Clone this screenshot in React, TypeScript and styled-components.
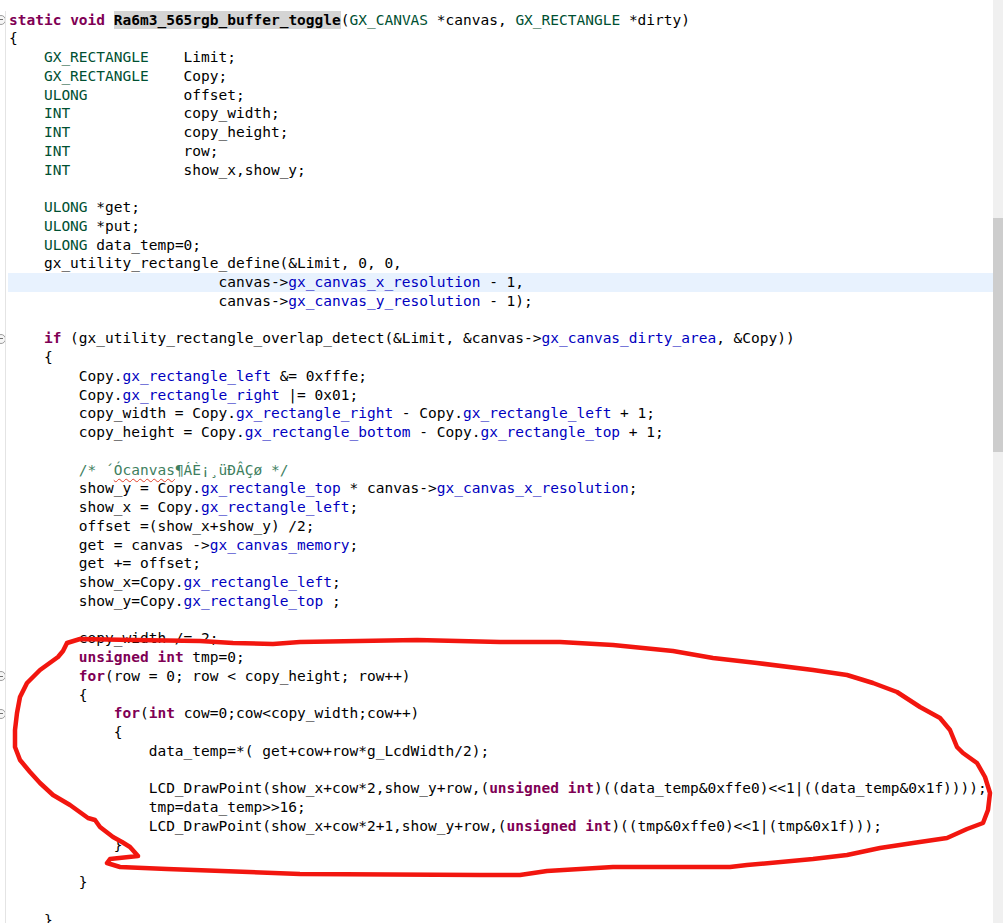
import React from "react";
import styled, { createGlobalStyle } from "styled-components";

const GlobalStyle = createGlobalStyle`
  html, body {
    margin: 0;
    padding: 0;
    background: #ffffff;
    overflow: hidden;
  }
`;

const Screen = styled.div`
  position: relative;
  display: flex;
  width: 1003px;
  height: 923px;
  overflow: hidden;
  background: #ffffff;
`;

const Editor = styled.div`
  flex: 1;
  padding-top: 10.6px;
  font-family: "DejaVu Sans Mono", "Liberation Mono", monospace;
  font-size: 14.5px;
  color: #000000;
`;

const Row = styled.div`
  display: flex;
  height: 18.76px;
  line-height: 18.76px;
`;

const Gutter = styled.div`
  width: 5px;
  flex: none;
  border-right: 1px solid #e4e4e4;
  display: flex;
  align-items: center;
  overflow: hidden;
`;

const FoldMark = styled.span`
  position: relative;
  flex: none;
  width: 8px;
  height: 8px;
  margin-left: -4px;
  border: 1px solid #9c9c9c;
  border-radius: 50%;
  background: #f6f6f6;

  &::after {
    content: "";
    position: absolute;
    left: 2px;
    right: 2px;
    top: 3.5px;
    height: 1px;
    background: #707070;
  }
`;

const Code = styled.div<{ $current?: boolean }>`
  flex: 1;
  margin-left: 2px;
  padding-left: 1px;
  white-space: pre;
  background: ${(p) => (p.$current ? "#e8f2fe" : "transparent")};
`;

type Kind = "kw" | "type" | "field" | "comment" | "fn" | "spell" | "plain";

const Tok = styled.span<{ $kind: Kind }>`
  color: ${(p) =>
    p.$kind === "kw"
      ? "#7f0055"
      : p.$kind === "type"
      ? "#005032"
      : p.$kind === "field"
      ? "#0000c0"
      : p.$kind === "comment" || p.$kind === "spell"
      ? "#3f7f5f"
      : "#000000"};
  font-weight: ${(p) => (p.$kind === "kw" || p.$kind === "fn" ? 700 : 400)};
  background: ${(p) => (p.$kind === "fn" ? "#d4d4d4" : "transparent")};
  padding: ${(p) => (p.$kind === "fn" ? "1px 0" : "0")};
  text-decoration: ${(p) => (p.$kind === "spell" ? "underline wavy #e0402a" : "none")};
  text-decoration-thickness: 1px;
  text-underline-offset: 3px;
`;

const Scrollbar = styled.div`
  width: 10px;
  flex: none;
  background: #f0f0f0;
  display: flex;
  flex-direction: column;
`;

const Thumb = styled.div`
  margin-top: 218px;
  height: 234px;
  background: #cdcdcd;
`;

const Scribble = styled.svg`
  position: absolute;
  top: 0;
  left: 0;
  pointer-events: none;
`;

type Seg = [Kind, string] | string;
type Line = { segs: Seg[]; fold?: boolean; current?: boolean };

const T = (s: string): Seg => ["type", s];
const K = (s: string): Seg => ["kw", s];
const F = (s: string): Seg => ["field", s];

const lines: Line[] = [
  {
    fold: true,
    segs: [K("static"), " ", K("void"), " ", ["fn", "Ra6m3_565rgb_buffer_toggle"], "(", T("GX_CANVAS"), " *canvas, ", T("GX_RECTANGLE"), " *dirty)"],
  },
  { segs: ["{"] },
  { segs: ["    ", T("GX_RECTANGLE"), "    Limit;"] },
  { segs: ["    ", T("GX_RECTANGLE"), "    Copy;"] },
  { segs: ["    ", T("ULONG"), "           offset;"] },
  { segs: ["    ", T("INT"), "             copy_width;"] },
  { segs: ["    ", T("INT"), "             copy_height;"] },
  { segs: ["    ", T("INT"), "             row;"] },
  { segs: ["    ", T("INT"), "             show_x,show_y;"] },
  { segs: [""] },
  { segs: ["    ", T("ULONG"), " *get;"] },
  { segs: ["    ", T("ULONG"), " *put;"] },
  { segs: ["    ", T("ULONG"), " data_temp=0;"] },
  { segs: ["    gx_utility_rectangle_define(&Limit, 0, 0,"] },
  { current: true, segs: ["                        canvas->", F("gx_canvas_x_resolution"), " - 1,"] },
  { segs: ["                        canvas->", F("gx_canvas_y_resolution"), " - 1);"] },
  { segs: [""] },
  {
    fold: true,
    segs: ["    ", K("if"), " (gx_utility_rectangle_overlap_detect(&Limit, &canvas->", F("gx_canvas_dirty_area"), ", &Copy))"],
  },
  { segs: ["    {"] },
  { segs: ["        Copy.", F("gx_rectangle_left"), " &= 0xfffe;"] },
  { segs: ["        Copy.", F("gx_rectangle_right"), " |= 0x01;"] },
  { segs: ["        copy_width = Copy.", F("gx_rectangle_right"), " - Copy.", F("gx_rectangle_left"), " + 1;"] },
  { segs: ["        copy_height = Copy.", F("gx_rectangle_bottom"), " - Copy.", F("gx_rectangle_top"), " + 1;"] },
  { segs: [""] },
  { segs: ["        ", ["comment", "/* ´"], ["spell", "Ócanvas"], ["comment", "¶ÁÈ¡¸üÐÂÇø */"]] },
  { segs: ["        show_y = Copy.", F("gx_rectangle_top"), " * canvas->", F("gx_canvas_x_resolution"), ";"] },
  { segs: ["        show_x = Copy.", F("gx_rectangle_left"), ";"] },
  { segs: ["        offset =(show_x+show_y) /2;"] },
  { segs: ["        get = canvas ->", F("gx_canvas_memory"), ";"] },
  { segs: ["        get += offset;"] },
  { segs: ["        show_x=Copy.", F("gx_rectangle_left"), ";"] },
  { segs: ["        show_y=Copy.", F("gx_rectangle_top"), " ;"] },
  { segs: [""] },
  { segs: ["        copy_width /= 2;"] },
  { segs: ["        ", K("unsigned"), " ", K("int"), " tmp=0;"] },
  { fold: true, segs: ["        ", K("for"), "(row = 0; row < copy_height; row++)"] },
  { segs: ["        {"] },
  { fold: true, segs: ["            ", K("for"), "(", K("int"), " cow=0;cow<copy_width;cow++)"] },
  { segs: ["            {"] },
  { segs: ["                data_temp=*( get+cow+row*g_LcdWidth/2);"] },
  { segs: [""] },
  {
    segs: ["                LCD_DrawPoint(show_x+cow*2,show_y+row,(", K("unsigned"), " ", K("int"), ")((data_temp&0xffe0)<<1|((data_temp&0x1f))));"],
  },
  { segs: ["                tmp=data_temp>>16;"] },
  {
    segs: ["                LCD_DrawPoint(show_x+cow*2+1,show_y+row,(", K("unsigned"), " ", K("int"), ")((tmp&0xffe0)<<1|(tmp&0x1f)));"],
  },
  { segs: ["            }"] },
  { segs: [""] },
  { segs: ["        }"] },
  { segs: [""] },
  { segs: ["    }"] },
];

// hand-drawn red loop around the inner for-loop
const loop: [number, number][] = [
  [67, 643], [80, 639], [133, 640], [200, 641], [233, 643], [273, 644], [300, 642],
  [417, 640], [500, 642], [560, 642], [613, 645], [673, 651], [713, 658], [757, 663],
  [813, 670], [847, 675], [873, 683], [897, 692], [920, 707], [940, 718], [950, 730],
  [957, 747], [963, 753], [977, 763], [985, 777], [990, 793], [988, 810], [983, 823],
  [967, 829], [947, 838], [913, 843], [880, 848], [847, 855], [813, 859], [747, 865],
  [730, 867], [613, 867], [547, 871], [520, 875], [480, 875], [300, 874], [167, 869],
  [120, 867], [107, 863], [110, 859], [138, 856], [130, 847], [122, 842], [113, 837],
  [100, 827], [95, 820], [88, 818], [70, 805], [53, 795], [40, 783], [30, 772],
  [20, 760], [15, 747], [15, 730], [17, 713], [20, 697], [27, 683], [40, 670],
  [58, 657], [63, 651], [67, 643],
];

const loopPath = loop.map(([x, y], i) => `${i ? "L" : "M"}${x} ${y}`).join(" ");

export default function App() {
  return (
    <Screen>
      <GlobalStyle />
      <Editor>
        {lines.map((line, i) => (
          <Row key={i}>
            <Gutter>{line.fold && <FoldMark />}</Gutter>
            <Code $current={line.current}>
              {line.segs.map((s, j) =>
                typeof s === "string" ? (
                  <React.Fragment key={j}>{s}</React.Fragment>
                ) : (
                  <Tok key={j} $kind={s[0]}>
                    {s[1]}
                  </Tok>
                )
              )}
            </Code>
          </Row>
        ))}
      </Editor>
      <Scrollbar>
        <Thumb />
      </Scrollbar>
      <Scribble width="1003" height="923" viewBox="0 0 1003 923">
        <path d={loopPath} fill="none" stroke="#f2160f" strokeWidth="4.5" strokeLinejoin="round" strokeLinecap="round" />
      </Scribble>
    </Screen>
  );
}
